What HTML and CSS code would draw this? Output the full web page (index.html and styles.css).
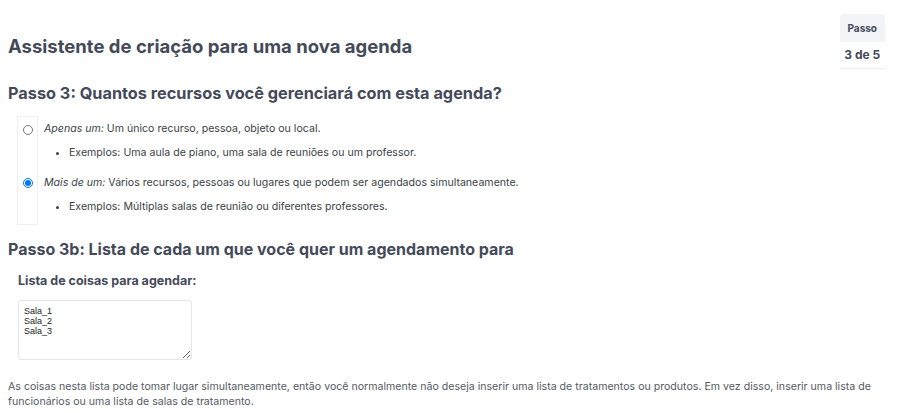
FILE: index.html
```html
<!DOCTYPE html>
<html>
<head>
	<meta charset="utf-8">
	<title>Nova agenda</title>
	<link rel="stylesheet" href="styles.css">
</head>
<body>
	<div class = "header">
		<h1>Assistente de criação para uma nova agenda</h1>
		<table class = "progress">
			<thead><tr><th>Passo</th></tr></thead>
			<tbody><tr><td>3 de 5</td></tr></tbody>
		</table>
	</div>

	<h2>Passo 3: Quantos recursos você gerenciará com esta agenda?</h2>
	<table class = "choices">
		<tr>
			<td class = "radio"><input type="radio" name="count"></td>
			<td class = "option">
				<p><i>Apenas um:</i> Um único recurso, pessoa, objeto ou local.</p>
				<ul><li>Exemplos: Uma aula de piano, uma sala de reuniões ou um professor.</li></ul>
			</td>
		</tr>
		<tr>
			<td class = "radio"><input type="radio" name="count" checked></td>
			<td class = "option">
				<p><i>Mais de um:</i> Vários recursos, pessoas ou lugares que podem ser agendados simultaneamente.</p>
				<ul><li>Exemplos: Múltiplas salas de reunião ou diferentes professores.</li></ul>
			</td>
		</tr>
	</table>

	<h2 class = "sub">Passo 3b: Lista de cada um que você quer um agendamento para</h2>
	<div class = "list">
		<h3>Lista de coisas para agendar:</h3>
		<textarea>Sala_1
Sala_2
Sala_3</textarea>
	</div>
	<p class = "note">As coisas nesta lista pode tomar lugar simultaneamente, então você normalmente não deseja inserir uma lista de tratamentos ou produtos. Em vez disso, inserir uma lista de funcionários ou uma lista de salas de tratamento.</p>
</body>
</html>
```
FILE: styles.css
```css
*{
	margin:0;
	padding:0;
	box-sizing:border-box;
}

body{
	font-family:Inter, "Noto Sans", sans-serif;
	font-size:10.6px;
	color:#3b3f47;
	background:white;
	padding:0 8px;
}

.header{
	display:flex;
	justify-content:space-between;
	align-items:flex-start;
	padding-top:14px;
}

.header h1{
	font-size:18.5px;
	font-weight:700;
	color:#444a59;
	margin-top:21px;
}

.progress{
	border-collapse:collapse;
	margin-right:7px;
	font-size:10px;
	font-weight:700;
	color:#444a59;
}

.progress th{
	background:#f1f3f6;
	border-radius:4px 4px 0 0;
	padding:0 8px;
	height:28px;
	font-weight:700;
}

.progress td{
	height:26px;
	text-align:center;
	border-bottom:1px solid #eceef1;
	font-size:12px;
}

h2{
	font-size:16.3px;
	font-weight:700;
	color:#444a59;
	margin-top:14px;
}

h2.sub{
	font-size:16px;
}

.choices{
	border-collapse:collapse;
	margin:13px 0 0 9px;
}

.choices td{
	vertical-align:top;
}

.choices .radio{
	width:20px;
	border-left:1px solid #eef0f2;
	border-right:1px solid #eef0f2;
	text-align:center;
}

.choices tr:first-child .radio{
	border-top:1px solid #eef0f2;
}

.choices tr:last-child .radio{
	border-bottom:1px solid #eef0f2;
}

.radio input{
	width:10px;
	height:10px;
	margin-top:8px;
}

.option{
	padding:6px 0 0 6px;
}

.option p{
	height:18px;
}

.option ul{
	margin:6px 0 8px 25px;
	height:16px;
}

h3{
	font-size:12.5px;
	font-weight:700;
	color:#444a59;
	margin:14px 0 0;
}

.list{
	padding:0 0 0 10px;
}

.list textarea{
	display:block;
	margin-top:12px;
	width:174px;
	height:60px;
	border:1px solid #e3e5e8;
	border-radius:3px;
	padding:5px 5px;
	font-family:"Liberation Sans", sans-serif;
	font-size:9px;
	line-height:10px;
	color:#222;
	resize:vertical;
}

.note{
	margin-top:19px;
	color:#555a63;
	line-height:15px;
}
```
